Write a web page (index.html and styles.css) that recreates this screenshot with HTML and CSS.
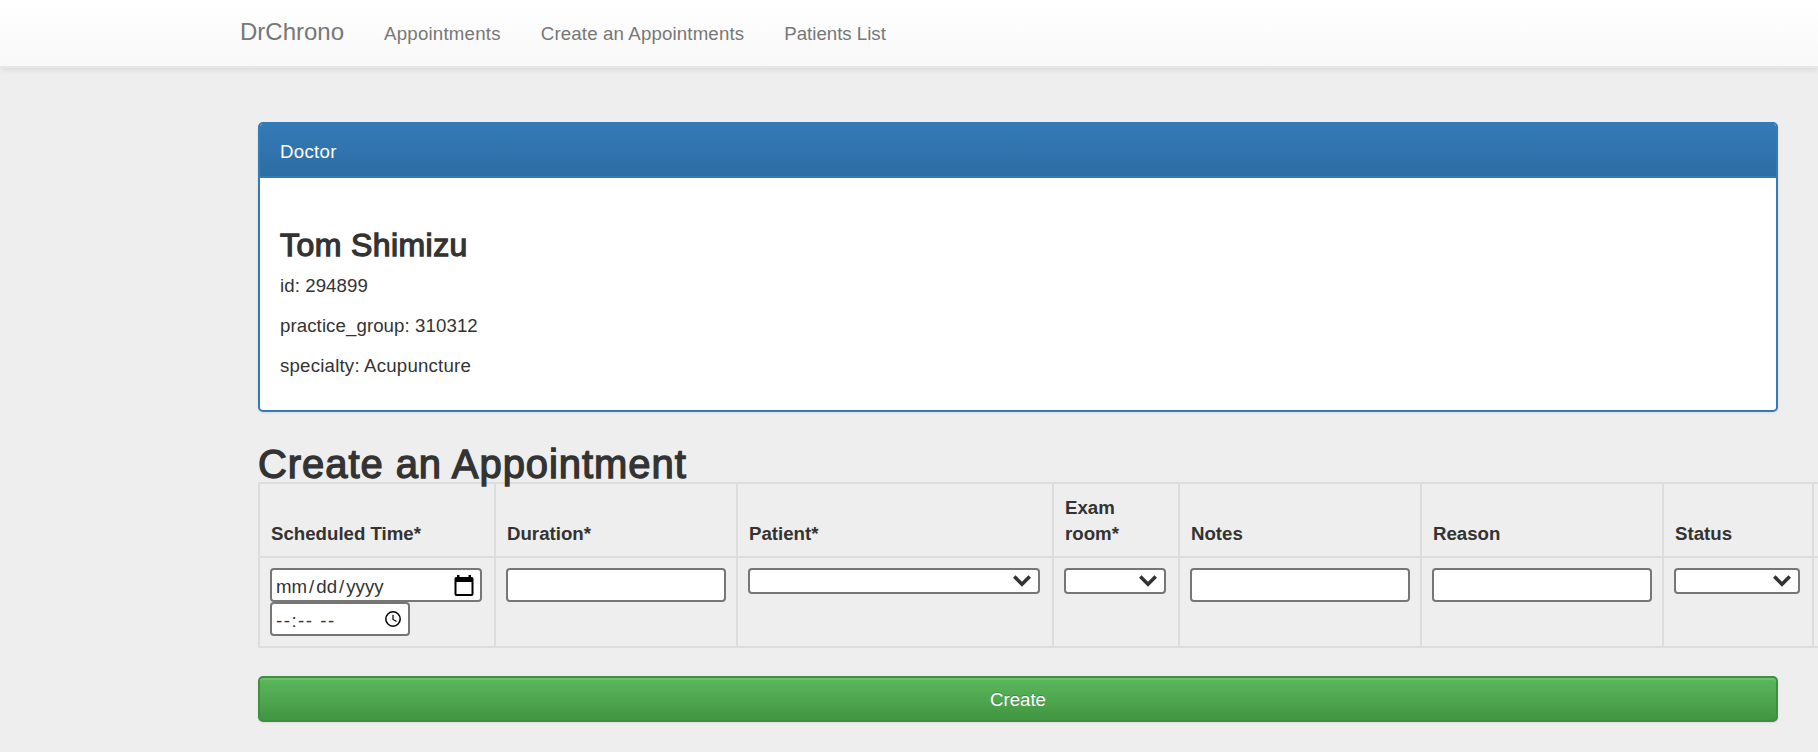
FILE: index.html
```html
<!DOCTYPE html>
<html lang="en">
<head>
<meta charset="utf-8">
<title>DrChrono</title>
<link rel="stylesheet" href="styles.css">
</head>
<body>
<nav class="navbar">
  <a class="brand">DrChrono</a>
  <a class="nav-link nav-appts">Appointments</a>
  <a class="nav-link nav-create">Create an Appointments</a>
  <a class="nav-link nav-patients">Patients List</a>
</nav>
<main class="container">
  <section class="panel">
    <div class="panel-heading">Doctor</div>
    <div class="panel-body">
      <h3 class="doctor-name">Tom Shimizu</h3>
      <p>id: 294899</p>
      <p class="group">practice_group: 310312</p>
      <p class="specialty">specialty: Acupuncture</p>
    </div>
  </section>
  <h1 class="title">Create an Appointment</h1>
  <div class="table">
    <div class="th">Scheduled Time*</div>
    <div class="th">Duration*</div>
    <div class="th">Patient*</div>
    <div class="th">Exam<br>room*</div>
    <div class="th">Notes</div>
    <div class="th">Reason</div>
    <div class="th">Status</div>
    <div class="th th-edge"></div>
    <div class="td">
      <div class="field date"><span class="date-text">mm<span class="slash">/</span>dd<span class="slash">/</span>yyyy</span>
        <svg class="calendar" width="20" height="22" viewBox="0 0 20 22"><path fill-rule="evenodd" d="M3 0h2.500v2h9V0H17v2h.6A1.900 1.900 0 0 1 19.500 4v15a1.900 1.900 0 0 1-1.900 2H2.400A1.900 1.900 0 0 1 .500 19V4a1.900 1.900 0 0 1 1.900-2H3zM2.500 7v12h15V7z"/></svg>
      </div>
      <div class="field time"><span class="time-text">--:-- --</span>
        <svg class="clock" width="16" height="16" viewBox="0 0 16 16" fill="none" stroke="#000"><circle cx="8" cy="8" r="7.200" stroke-width="1.500"/><path d="M8 3.800v4.600l3.600 2.200" stroke-width="1.200"/></svg>
      </div>
    </div>
    <div class="td"><div class="field"></div></div>
    <div class="td"><div class="field select"><svg class="chevron" width="18" height="12" viewBox="0 0 18 12"><path d="M1.300 1.500 9 9.200l7.700-7.700" fill="none" stroke="#333" stroke-width="3.600"/></svg></div></div>
    <div class="td"><div class="field select"><svg class="chevron" width="18" height="12" viewBox="0 0 18 12"><path d="M1.300 1.500 9 9.200l7.700-7.700" fill="none" stroke="#333" stroke-width="3.600"/></svg></div></div>
    <div class="td"><div class="field"></div></div>
    <div class="td"><div class="field"></div></div>
    <div class="td"><div class="field select"><svg class="chevron" width="18" height="12" viewBox="0 0 18 12"><path d="M1.300 1.500 9 9.200l7.700-7.700" fill="none" stroke="#333" stroke-width="3.600"/></svg></div></div>
    <div class="td td-edge"></div>
  </div>
  <button class="create-btn">Create</button>
</main>
</body>
</html>
```
FILE: styles.css
```css
* { box-sizing: border-box; }
body {
  margin: 0;
  height: 752px;
  overflow: hidden;
  background: #eee;
  color: #333;
  font: 18.667px/26px "Helvetica Neue", Helvetica, "Liberation Sans", Arial, sans-serif;
}
.navbar {
  display: flex;
  align-items: center;
  height: 68px;
  padding-left: 240px;
  border-bottom: 2px solid #e7e7e7;
  background: linear-gradient(#fff, #f8f8f8);
  box-shadow: 0 2px 6px rgba(0, 0, 0, .085);
  color: #777;
}
.brand { font-size: 24px; margin-right: 40px; padding-bottom: 2px; }
.nav-link { margin-right: 40px; padding-top: 1px; white-space: nowrap; }
.nav-appts { letter-spacing: .22px; }
.nav-create { letter-spacing: .15px; }
.container { width: 1520px; margin: 54px 0 0 258px; }
.panel {
  height: 290px;
  border: 2px solid #337ab7;
  border-radius: 5px;
  background: #fff;
  box-shadow: 0 1px 3px rgba(0, 0, 0, .08);
}
.panel-heading {
  height: 54px;
  padding: 15px 20px 0;
  border-bottom: 2px solid #337ab7;
  border-radius: 3px 3px 0 0;
  background: linear-gradient(#337ab7, #2e6da4);
  color: #fff;
  letter-spacing: .3px;
}
.panel-body { padding: 49px 20px 0; }
.doctor-name, .title { font-weight: 400; -webkit-text-stroke: 1.3px #333; }
.doctor-name { margin: 0 0 10px; font-size: 32px; line-height: 36px; letter-spacing: .42px; }
.panel-body p { margin: 0 0 14px; letter-spacing: .08px; }
.panel-body .specialty { letter-spacing: .2px; }
.title {
  position: relative;
  z-index: 1;
  height: 40px;
  margin: 30px 0 0;
  font-size: 40px;
  line-height: 44px;
  letter-spacing: .93px;
}
.table {
  display: grid;
  grid-template-columns: 236px 242px 316px 126px 242px 242px 150px 4px;
  grid-template-rows: 74px 90px;
  width: 1560px;
  border-left: 2px solid #ddd;
  border-top: 2px solid #ddd;
}
.th, .td { border-right: 2px solid #ddd; border-bottom: 2px solid #ddd; padding: 10px; }
.th { display: flex; align-items: flex-end; padding: 10px 10px 9px 11px; font-weight: 700; }
.th-edge, .td-edge { padding: 0; border-right: 0; }
.field {
  display: flex;
  align-items: center;
  height: 34px;
  border: 2px solid #767676;
  border-radius: 4px;
  background: #fff;
}
.date { width: 212px; padding: 0 6px 0 4px; justify-content: space-between; }
.time { width: 140px; padding: 0 7px 0 4px; justify-content: space-between; }
.date-text, .time-text { padding-top: 3px; white-space: nowrap; }
.slash { margin: 0 2px; }
.time-text { letter-spacing: 1.5px; }
.calendar { margin-top: 1px; }
.select { height: 26px; margin-right: 2px; padding-right: 7px; justify-content: flex-end; }
.create-btn {
  display: block;
  width: 1520px;
  height: 46px;
  margin-top: 28px;
  padding: 2px 0 0;
  border: 2px solid #3e8f3e;
  border-radius: 5px;
  background: linear-gradient(#5cb85c, #419641);
  box-shadow: inset 0 2px 0 rgba(255, 255, 255, .12), 0 1px 2px rgba(0, 0, 0, .08);
  color: #fff;
  font: inherit;
  text-shadow: 0 -1px 0 rgba(0, 0, 0, .2);
}
```
